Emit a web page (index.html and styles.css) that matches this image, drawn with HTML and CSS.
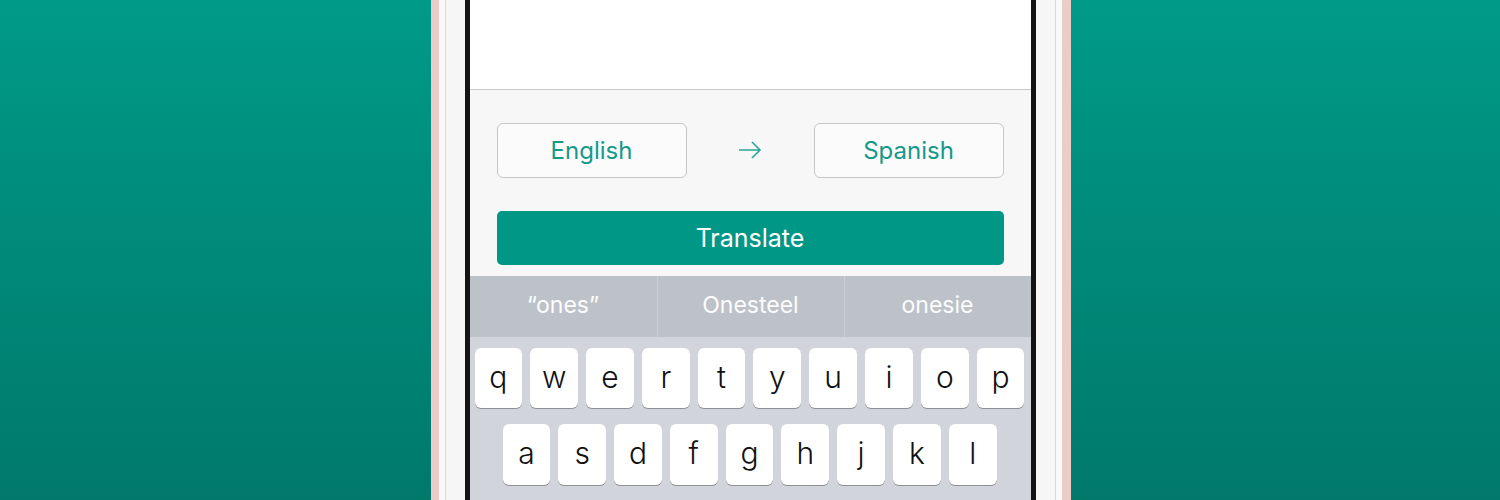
FILE: index.html
```html
<!DOCTYPE html>
<html lang="en">
<head>
  <meta charset="UTF-8">
  <meta name="viewport" content="width=device-width, initial-scale=1.0">
  <title>Translate</title>
  <link rel="stylesheet" href="styles.css">
</head>
<body>
  <div class="phone">
    <div class="face">
      <div class="face-inner">
        <div class="bezel">
          <div class="screen">
            <div class="text-area"></div>
            <div class="lang-row">
              <button class="lang-btn">English</button>
              <svg class="arrow" width="26" height="20" viewBox="0 0 26 20">
                <path d="M2 10 H23 M15 2 L23 10 L15 18" fill="none" stroke="#2aa597" stroke-width="1.6"/>
              </svg>
              <button class="lang-btn">Spanish</button>
            </div>
            <button class="translate-btn">Translate</button>
            <div class="suggestions">
              <div class="suggestion">&ldquo;ones&rdquo;</div>
              <div class="suggestion">Onesteel</div>
              <div class="suggestion">onesie</div>
            </div>
            <div class="keyboard">
              <div class="key-row">
                <div class="key">q</div><div class="key">w</div><div class="key">e</div><div class="key">r</div><div class="key">t</div>
                <div class="key">y</div><div class="key">u</div><div class="key">i</div><div class="key">o</div><div class="key">p</div>
              </div>
              <div class="key-row row-2">
                <div class="key">a</div><div class="key">s</div><div class="key">d</div><div class="key">f</div><div class="key">g</div>
                <div class="key">h</div><div class="key">j</div><div class="key">k</div><div class="key">l</div>
              </div>
            </div>
          </div>
        </div>
      </div>
    </div>
  </div>
</body>
</html>
```

FILE: styles.css
```css
html, body {
  margin: 0;
  height: 500px;
  overflow: hidden;
}
body {
  font-family: Inter, "Liberation Sans", sans-serif;
  background: linear-gradient(to bottom, #009a88, #00796b);
  display: flex;
  justify-content: center;
}
.phone {
  width: 623px;
  margin-left: 1px;
  height: 500px;
  border-left: 8px solid #ecccc7;
  border-right: 9px solid #ecccc7;
  box-shadow: inset 2px 0 0 #f5dcd8, inset -2px 0 0 #f5dcd8;
}
.face {
  height: 100%;
  background: #f9f9f9;
  padding: 0 6px;
}
.face-inner {
  height: 100%;
  border-left: 1px solid #d9d9d9;
  border-right: 1px solid #d9d9d9;
  padding: 0 19px;
  background: #f6f6f6;
}
.bezel {
  height: 100%;
  background: #141414;
  padding: 0 5px;
}
.screen {
  height: 100%;
  background: #f7f7f7;
  display: flex;
  flex-direction: column;
  overflow: hidden;
}
.text-area {
  height: 89px;
  flex: none;
  background: #fff;
  border-bottom: 1px solid #c9c9c9;
}
.lang-row {
  display: flex;
  align-items: center;
  justify-content: space-between;
  padding: 0 27px;
  margin-top: 33px;
}
.lang-btn {
  width: 190px;
  height: 55px;
  background: #fbfbfb;
  border: 1.5px solid #c6c6c6;
  border-radius: 6px;
  color: #14998a;
  font-family: inherit;
  font-size: 24px;
  font-weight: 400;
  padding: 0;
}
.arrow {
  display: block;
  margin-top: -2px;
}
.translate-btn {
  flex: none;
  margin: 33px 27px 0;
  height: 54px;
  background: #009787;
  border: none;
  border-radius: 5px;
  color: #fff;
  font-family: inherit;
  font-size: 25px;
  font-weight: 400;
  padding: 0;
}
.suggestions {
  flex: none;
  margin-top: 11px;
  height: 61px;
  background: #bdc2c9;
  display: grid;
  grid-template-columns: 1fr 1fr 1fr;
}
.suggestion {
  display: flex;
  align-items: center;
  justify-content: center;
  color: #fcfcfd;
  font-size: 23px;
  font-weight: 400;
  padding-bottom: 3px;
  border-left: 1px solid #cbcfd5;
}
.suggestion:first-child {
  border-left: none;
}
.keyboard {
  flex: 1;
  background: #d1d4da;
  padding: 11px 6px 0 5px;
  display: flex;
  flex-direction: column;
  gap: 16px;
}
.key-row {
  display: flex;
  gap: 8px;
  height: 60px;
}
.row-2 {
  padding: 0 28px;
  height: 61px;
}
.key {
  flex: 1;
  background: #fff;
  border-radius: 6px;
  box-shadow: 0 1px 0 #8e9094;
  display: flex;
  align-items: center;
  justify-content: center;
  color: #111;
  font-size: 30px;
  font-weight: 300;
  padding-bottom: 3px;
  box-sizing: border-box;
}
```
